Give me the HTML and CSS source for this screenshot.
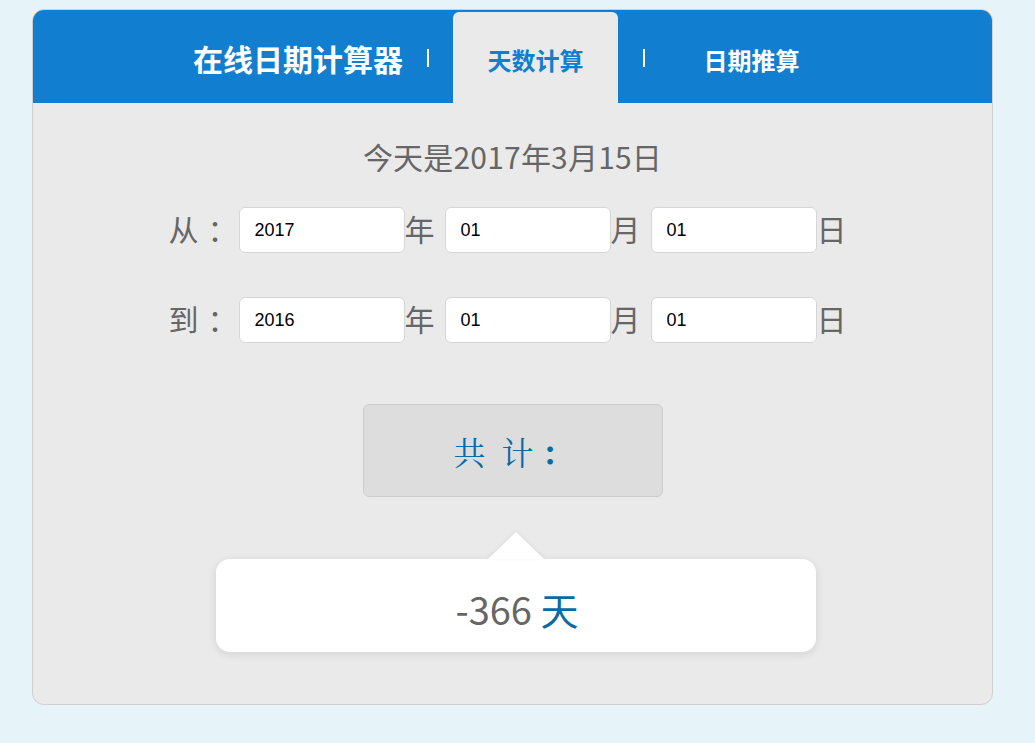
FILE: index.html
```html
<!DOCTYPE html>
<html lang="zh-CN">
<head>
<meta charset="utf-8">
<title>在线日期计算器</title>
<link rel="stylesheet" href="styles.css">
</head>
<body>
<div class="card">
  <div class="header">
    <div class="title">在线日期计算器</div>
    <span class="sep"></span>
    <div class="tab active">天数计算</div>
    <span class="sep"></span>
    <div class="tab">日期推算</div>
  </div>
  <div class="content">
    <div class="today">今天是2017年3月15日</div>
    <div class="row">
      <span class="label">从：</span>
      <input class="field" type="text" value="2017">
      <span class="unit">年</span>
      <input class="field" type="text" value="01">
      <span class="unit">月</span>
      <input class="field" type="text" value="01">
      <span class="unit">日</span>
    </div>
    <div class="row row2">
      <span class="label">到：</span>
      <input class="field" type="text" value="2016">
      <span class="unit">年</span>
      <input class="field" type="text" value="01">
      <span class="unit">月</span>
      <input class="field" type="text" value="01">
      <span class="unit">日</span>
    </div>
    <button class="total" type="button">共&ensp;计<span class="colon">：</span></button>
    <div class="result">
      <span class="arrow"></span>
      <span class="value"><span class="num">-366</span> <span class="day">天</span></span>
    </div>
  </div>
</div>
</body>
</html>
```
FILE: styles.css
```css
html, body {
  margin: 0;
  padding: 0;
}
body {
  background: #e6f3f9;
  font-family: "Noto Sans CJK SC", "Noto Sans", sans-serif;
  color: #666;
  height: 743px;
  overflow: hidden;
}
.card {
  margin: 9px 0 0 32px;
  width: 959px;
  border: 1px solid #cfcfcf;
  border-radius: 12px;
  overflow: hidden;
  background: #eaeaea;
}
.header {
  height: 93px;
  background: #117ecf;
  display: flex;
  align-items: center;
  padding-left: 160px;
  box-sizing: border-box;
}
.title {
  color: #fff;
  font-size: 30px;
  font-weight: 700;
  line-height: 40px;
  padding-top: 2px;
  width: 209px;
  white-space: nowrap;
}
.sep {
  display: block;
  width: 2px;
  height: 18px;
  background: #fff;
  margin: 0 24px 0 25px;
  transform: translateY(1px);
}
.tab {
  align-self: flex-end;
  width: 165px;
  height: 91px;
  display: flex;
  align-items: center;
  justify-content: center;
  color: #fff;
  font-size: 24px;
  font-weight: 700;
  padding-top: 4px;
  box-sizing: border-box;
  border-radius: 6px 6px 0 0;
}
.tab.active {
  background: #eaeaea;
  color: #117ecf;
}
.content {
  padding: 33px 0 52px;
  display: flex;
  flex-direction: column;
  align-items: center;
}
.today {
  font-size: 30px;
  line-height: 40px;
  color: #666;
  letter-spacing: 0.2px;
}
.row {
  margin-top: 31px;
  display: flex;
  align-items: center;
  height: 46px;
}
.row2 {
  margin-top: 44px;
}
.label {
  width: 70px;
  font-size: 30px;
  line-height: 46px;
  color: #666;
  margin-top: -4px;
  letter-spacing: 9px;
  white-space: nowrap;
}
.unit {
  width: 40px;
  font-size: 30px;
  line-height: 46px;
  color: #666;
  margin-top: -4px;
}
.field {
  width: 166px;
  height: 46px;
  box-sizing: border-box;
  border: 1px solid #d6d6d6;
  border-radius: 6px;
  background: #fff;
  padding: 0 15px;
  font-family: "Liberation Sans", Arial, sans-serif;
  font-size: 18px;
  color: #000;
  outline: none;
}
.total {
  margin-top: 61px;
  width: 300px;
  height: 93px;
  border: 1px solid #cdcdcd;
  border-radius: 6px;
  background: #dddddd;
  color: #0b6aa2;
  font-family: "Noto Serif CJK SC", "Noto Sans CJK SC", serif;
  font-size: 32px;
  padding: 0 0 0 2px;
  cursor: pointer;
  white-space: nowrap;
}
.colon {
  margin-left: 8px;
  font-weight: 700;
}
.result {
  position: relative;
  margin-top: 62px;
  margin-left: 7px;
  width: 600px;
  height: 93px;
  background: #fff;
  border-radius: 14px;
  box-shadow: 0 2px 10px rgba(0, 0, 0, 0.1);
  display: flex;
  align-items: center;
  justify-content: center;
  padding-top: 7px;
  box-sizing: border-box;
}
.value {
  font-size: 38px;
  line-height: 1;
  padding-left: 2px;
}
.arrow {
  position: absolute;
  left: 272px;
  top: -27px;
  width: 0;
  height: 0;
  border-left: 28px solid transparent;
  border-right: 28px solid transparent;
  border-bottom: 27px solid #fff;
  filter: drop-shadow(0 -1px 2px rgba(0, 0, 0, 0.06));
}
.num {
  color: #666;
}
.day {
  color: #0b6aa2;
}
```
